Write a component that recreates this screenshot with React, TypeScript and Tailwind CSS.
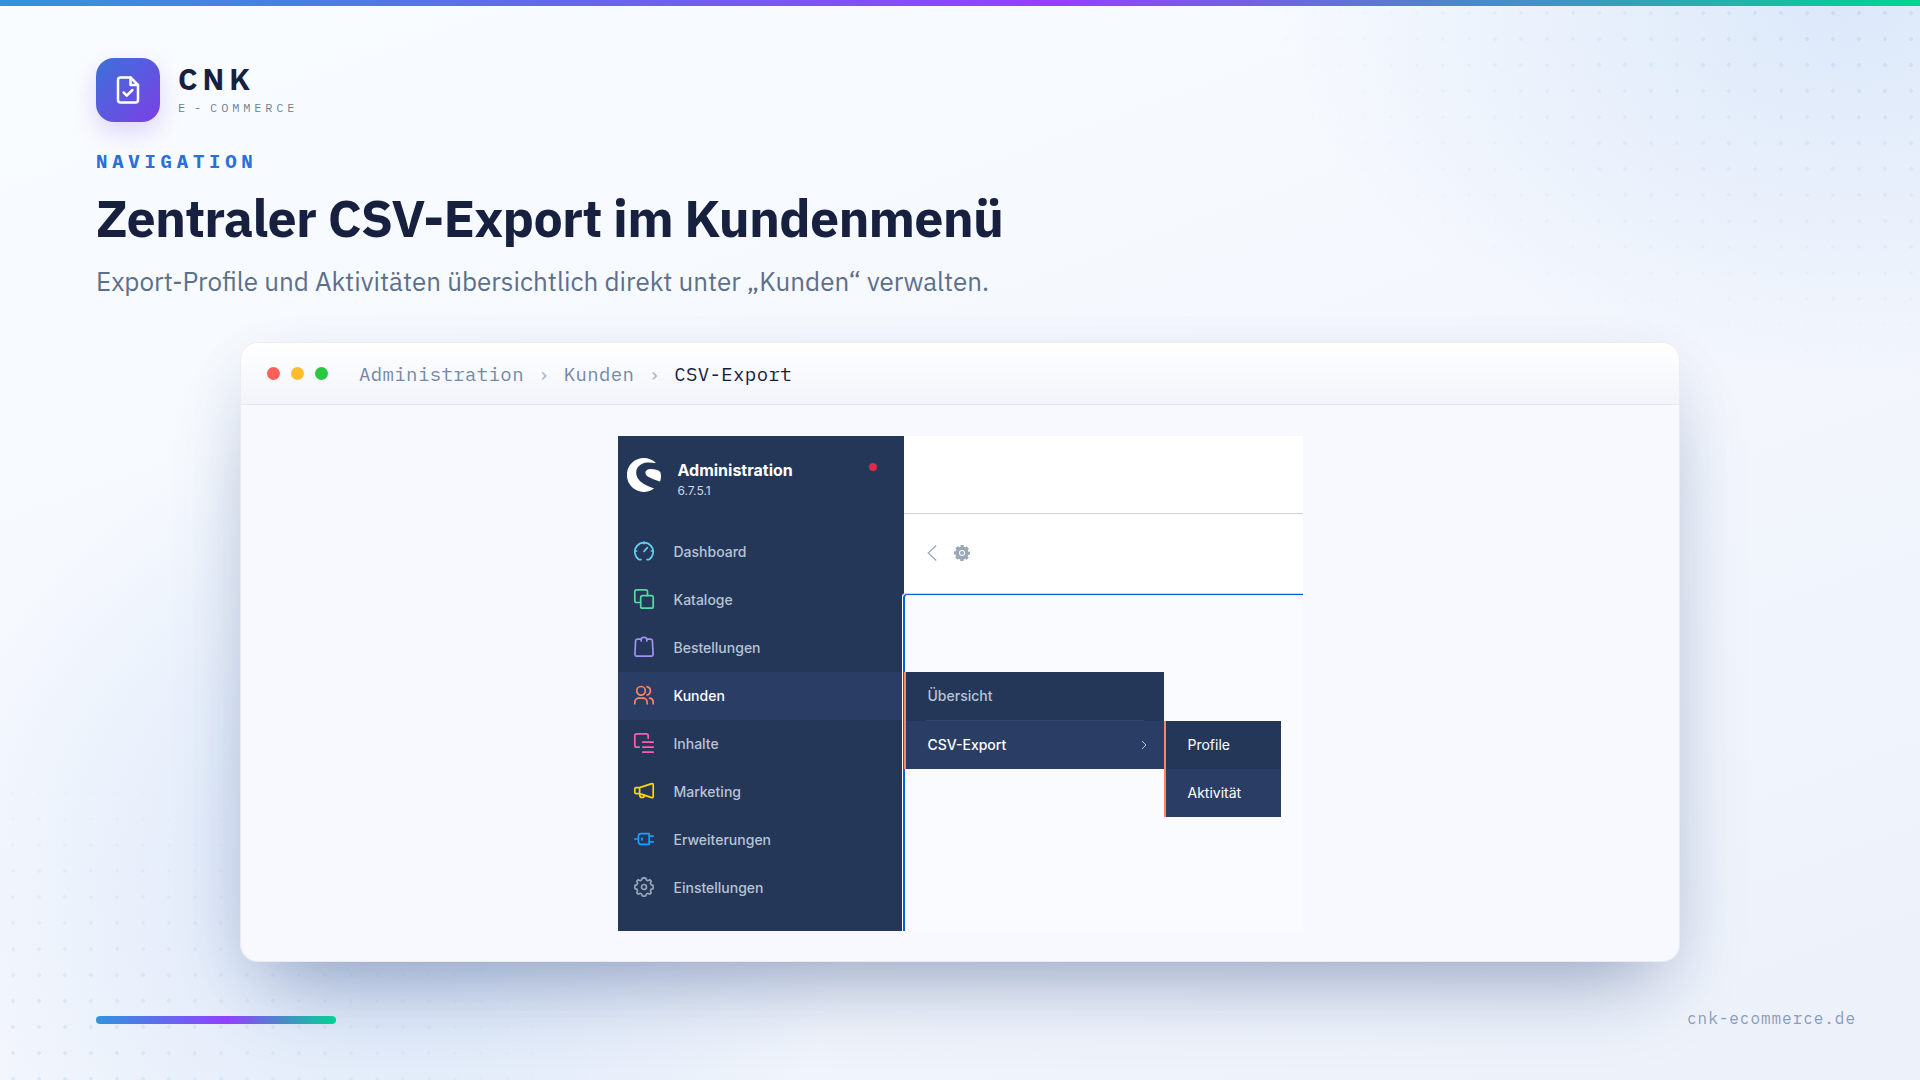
import type { ReactNode } from 'react'

type NavItem = {
  label: string
  color: string
  icon: ReactNode
  active?: boolean
}

const navItems: NavItem[] = [
  {
    label: 'Dashboard',
    color: 'text-[#66cbea]',
    icon: (
      <>
        <path d="M7 18.6H5A9.2 9.2 0 1 1 15 18.6h-2" />
        <path d="M10 1v1.6M1 10h1.6M17.4 10H19M10 10.4l3.4-3.8" />
      </>
    ),
  },
  {
    label: 'Kataloge',
    color: 'text-[#57d9a3]',
    icon: (
      <>
        <path d="M6.5 13.5H2.5a1.7 1.7 0 0 1-1.7-1.7V2.5A1.7 1.7 0 0 1 2.5.8h9.3a1.7 1.7 0 0 1 1.7 1.7v4" />
        <rect x="6.7" y="6.7" width="12.5" height="12.5" rx="1.8" />
      </>
    ),
  },
  {
    label: 'Bestellungen',
    color: 'text-[#a092f0]',
    icon: (
      <>
        <path d="M7.2 2.2H3.4a1.8 1.8 0 0 0-1.8 1.7L.9 17.3a1.8 1.8 0 0 0 1.8 1.9h14.6a1.8 1.8 0 0 0 1.8-1.9L18.4 3.9a1.8 1.8 0 0 0-1.8-1.7h-3.8" />
        <path d="M7.2 4V2.6a2.8 2.2 0 0 1 5.6 0V4" />
      </>
    ),
  },
  {
    label: 'Kunden',
    color: 'text-[#ff8562]',
    active: true,
    icon: (
      <>
        <circle cx="7" cy="5.8" r="4.3" />
        <path d="M.8 18.8v-1.4a4.2 4.2 0 0 1 4.2-4.2h4a4.2 4.2 0 0 1 4.2 4.2v1.4" />
        <path d="M13 1.6a4.3 4.3 0 0 1 0 8.4M15.6 13.2a4.2 4.2 0 0 1 3.6 4.2v1.4" />
      </>
    ),
  },
  {
    label: 'Inhalte',
    color: 'text-[#ff5cad]',
    icon: (
      <>
        <path d="M5.2 14.2H2.8a2 2 0 0 1-2-2V2.8a2 2 0 0 1 2-2h9.4a2 2 0 0 1 2 2v2.4" />
        <path d="M8.8 9.2h10.4M8.8 14.2h10.4M8.8 19.2h10.4" />
      </>
    ),
  },
  {
    label: 'Marketing',
    color: 'text-[#ffd500]',
    icon: (
      <>
        <path d="M5.6 6.6H2A1.2 1.2 0 0 0 .8 7.8v3.6A1.2 1.2 0 0 0 2 12.6h3.6zM5.6 6.6 17.8 2.6a1 1 0 0 1 1.4 1v12a1 1 0 0 1-1.4 1L5.6 12.6z" />
        <path d="M5.8 12.8v1.4a2.3 2.3 0 0 0 4.6 0" />
      </>
    ),
  },
  {
    label: 'Erweiterungen',
    color: 'text-[#189eff]',
    icon: (
      <>
        <path d="M.8 10h3.4" />
        <path d="M15.2 4.6H7a2.6 2.6 0 0 0-2.6 2.6v5.6A2.6 2.6 0 0 0 7 15.4h8.2z" />
        <path d="M15.2 7.2h4M15.2 12.8h4M8 9v2" />
      </>
    ),
  },
  {
    label: 'Einstellungen',
    color: 'text-[#95a5b8]',
    icon: (
      <>
        <path d="m10 .8 1.7.3.8 2 1.3.6 2.1-.8 1.3 1.3-.8 2.1.6 1.3 2 .8.2 1.6-.2 1.6-2 .8-.6 1.3.8 2.1-1.3 1.3-2.1-.8-1.3.6-.8 2-1.7.3-1.7-.3-.8-2-1.3-.6-2.1.8-1.3-1.3.8-2.1-.6-1.3-2-.8L.8 10l.2-1.6 2-.8.6-1.3-.8-2.1 1.3-1.3 2.1.8 1.3-.6.8-2z" />
        <circle cx="10" cy="10" r="2.5" />
      </>
    ),
  },
]

function Backdrop() {
  return (
    <>
      <div className="absolute inset-0 bg-[radial-gradient(ellipse_560px_380px_at_96%_0%,rgba(49,125,225,0.13),transparent),radial-gradient(ellipse_460px_440px_at_21%_79%,rgba(49,125,225,0.14),transparent)]" />
      <div className="absolute inset-0 bg-[radial-gradient(circle,rgba(43,108,176,0.11)_2px,transparent_2px)] bg-size-[26px_26px] mask-[radial-gradient(ellipse_680px_380px_at_100%_0%,black,transparent),radial-gradient(ellipse_600px_330px_at_0%_100%,black,transparent)]" />
    </>
  )
}

function Brand() {
  return (
    <div className="flex items-center gap-[18px]">
      <div className="flex size-16 items-center justify-center rounded-[18px] bg-linear-135/srgb from-[#3b72d8] to-[#7c3fe6] shadow-[0_10px_24px_rgba(124,58,237,0.20)]">
        <svg viewBox="0 0 24 24" className="size-[30px]" fill="none" stroke="white" strokeWidth="2" strokeLinecap="round" strokeLinejoin="round">
          <path d="M14 2H6a2 2 0 0 0-2 2v16a2 2 0 0 0 2 2h12a2 2 0 0 0 2-2V8z" />
          <path d="M14 2v6h6" />
          <path d="m8.5 14 2.5 2.5 4.5-4.5" />
        </svg>
      </div>
      <div className="flex flex-col">
        <span className="text-[30px] leading-[34px] font-bold tracking-[5px]">CNK</span>
        <span className="mt-1 mb-0.5 font-['IBM_Plex_Mono','Liberation_Mono',monospace] text-xs leading-4 tracking-[0.32em] text-[#718096]">
          E<span className="mx-[5px]">-</span>COMMERCE
        </span>
      </div>
    </div>
  )
}

function Crumb({ children }: { children: ReactNode }) {
  return <a href="#" className="text-[#7488a8]">{children}</a>
}

function WindowBar() {
  return (
    <div className="flex h-[62px] items-center border-b border-[#e2e8f0] bg-linear-to-b/srgb from-white to-[#f1f4fa] px-[26px]">
      <div className="flex gap-[11px]">
        <span className="size-[13px] rounded-full bg-[#ff5f57]" />
        <span className="size-[13px] rounded-full bg-[#febc2e]" />
        <span className="size-[13px] rounded-full bg-[#28c840]" />
      </div>
      <nav className="ml-[31px] flex gap-3.5 font-['IBM_Plex_Mono','Liberation_Mono',monospace] text-[19px] leading-6 tracking-[0.02em]">
        <Crumb>Administration</Crumb>
        <span className="text-[#a9b7cc]">›</span>
        <Crumb>Kunden</Crumb>
        <span className="text-[#a9b7cc]">›</span>
        <span className="text-[#17213f]">CSV-Export</span>
      </nav>
    </div>
  )
}

function Sidebar() {
  return (
    <aside className="w-[286px] bg-[#243758]">
      <div className="flex h-[92px] items-start pt-[22px] pr-[27px] pl-[9px]">
        <svg viewBox="0 0 34 34" className="size-[34px]" fill="white">
          <path d="M28.5 4.6A17 17 0 1 0 26.8 30.8c.3-.2.2-.5-.1-.6-2.6-1.1-6.7-2.3-9.9-4.3C12.4 23 9.2 19.5 9.2 14.7c0-5.7 4.7-9.7 11-10.2 2.6-.2 5.4.1 8 .5.4.1.6-.2.3-.4z" />
          <path d="M34 17.2c-.1-1.6-.5-2.8-1-3.5-1.6-1.7-5.6-2.7-8.6-2.7-3.6 0-6 1.4-6 3.7 0 2.6 2.4 4.2 6.3 5.7 3.1 1.2 6.3 2.3 8.4 3.2.6-1.8 1-4.2.9-6.4z" />
        </svg>
        <div className="ml-[17px] flex flex-1 flex-col pt-0.5">
          <span className="text-base leading-5 font-bold text-white">Administration</span>
          <span className="mt-px text-xs leading-5 text-[#cdd8e6]">6.7.5.1</span>
        </div>
        <span className="mt-[5px] size-2 rounded-full bg-[#de294c]" />
      </div>
      <nav>
        {navItems.map(({ label, color, icon, active }) => (
          <a
            key={label}
            href="#"
            className={`flex h-12 items-center gap-5 px-4 text-sm font-medium ${
              active ? 'bg-[#2a3e65] text-white' : 'text-[#b7c3d6]'
            }`}
          >
            <svg
              viewBox="0 0 20 20"
              className={`-mt-0.5 size-5 overflow-visible ${color}`}
              fill="none"
              stroke="currentColor"
              strokeWidth="1.7"
              strokeLinecap="round"
              strokeLinejoin="round"
            >
              {icon}
            </svg>
            {label}
          </a>
        ))}
      </nav>
    </aside>
  )
}

// Flyout next to the active sidebar entry, with its own nested level
function Flyout() {
  return (
    <div className="absolute top-[236px] left-[286px] flex items-end text-sm text-white">
      <div className="w-[260px] border-l-2 border-[#ff8562] bg-[#243758] font-medium">
        <a href="#" className="flex h-12 items-center px-[22px] text-[#b7c3d6]">Übersicht</a>
        <div className="mx-5 h-px bg-[#33466a]" />
        <a href="#" className="flex h-12 items-center justify-between bg-[#2a3e65] pr-[17px] pl-[22px]">
          CSV-Export
          <svg viewBox="0 0 6 10" className="h-2.5 w-1.5" fill="none" stroke="#b7c3d6" strokeWidth="1">
            <path d="m1 1 4 4-4 4" />
          </svg>
        </a>
      </div>
      <div className="-mb-12 w-[117px] border-l-2 border-[#ff8562] bg-[#243758]">
        <a href="#" className="flex h-12 items-center px-[22px]">Profile</a>
        <a href="#" className="flex h-12 items-center bg-[#2a3e65] px-[22px]">Aktivität</a>
      </div>
    </div>
  )
}

function AdminPreview() {
  return (
    <div className="relative flex h-[495px] w-[685px] font-['Inter',sans-serif]">
      <Sidebar />
      <main className="flex flex-1 flex-col bg-white">
        <div className="h-[78px] border-b border-[#cccfd3]" />
        <div className="flex h-[79px] items-center gap-[17px] px-[23px] pb-0.5 text-[#9aa8b5]">
          <button type="button" aria-label="Zurück">
            <svg viewBox="0 0 10 16" className="h-4 w-2.5" fill="none" stroke="currentColor" strokeWidth="1.2">
              <path d="M9.2.5 1.2 8l8 7.5" />
            </svg>
          </button>
          <button type="button" aria-label="Einstellungen">
            <svg viewBox="0 0 16 16" className="size-4" fill="currentColor">
              <circle cx="8" cy="8" r="4.8" fill="none" stroke="currentColor" strokeWidth="3.6" />
              <circle cx="8" cy="8" r="6.6" fill="none" stroke="currentColor" strokeWidth="2.8" strokeDasharray="3.2 1.984" strokeDashoffset="1.6" />
              <circle cx="8" cy="8" r="2" />
            </svg>
          </button>
        </div>
        <div className="-ml-0.5 flex flex-1 rounded-tl border-t border-l border-t-[#d1d9e0] border-l-white bg-white">
          <div className="flex-1 rounded-tl-sm border-t border-l-2 border-[#0060d6] bg-[#fafbff]" />
        </div>
      </main>
      <Flyout />
    </div>
  )
}

export default function App() {
  return (
    <div className="relative flex min-h-screen flex-col overflow-hidden bg-linear-160/srgb from-[#f9fcff] via-[#f4f7fd] to-[#ecf1fa] font-['IBM_Plex_Sans','Roboto',sans-serif] text-[#17213f]">
      <Backdrop />
      <div className="relative h-1.5 bg-linear-to-r/srgb from-[#3194dc] via-[#9340ff] via-55% to-[#00d492]" />

      <header className="relative px-24 pt-[52px]">
        <Brand />
        <p className="mt-[27px] font-['IBM_Plex_Mono','Liberation_Mono',monospace] text-[19px] leading-6 font-bold tracking-[0.25em] text-[#2b6fd8]">
          NAVIGATION
        </p>
        <h1 className="mt-3 text-[52px] leading-[66px] font-bold tracking-[-0.015em]">
          Zentraler CSV-Export im Kundenmenü
        </h1>
        <p className="mt-3 text-[26px] leading-9 text-[#5d6f89]">
          Export-Profile und Aktivitäten übersichtlich direkt unter „Kunden“ verwalten.
        </p>
      </header>

      <section className="relative mx-auto mt-[43px] w-3/4 rounded-[18px] shadow-[0_40px_80px_-30px_rgba(30,58,115,0.42),0_20px_60px_rgba(40,70,130,0.07)]">
        <div className="overflow-hidden rounded-[18px] border border-[#e9ecf2] bg-[#f8f9fe]">
          <WindowBar />
          <div className="flex justify-center pt-[31px] pb-[30px]">
            <AdminPreview />
          </div>
        </div>
      </section>

      <footer className="relative mt-auto flex items-center justify-between pt-11 pr-16 pb-[51px] pl-24">
        <div className="mt-1 h-2 w-60 rounded bg-linear-to-r/srgb from-[#3194dc] via-[#9340ff] via-55% to-[#00d492]" />
        <a href="#" className="font-['IBM_Plex_Mono','Liberation_Mono',monospace] text-base leading-6 tracking-[0.06em] text-[#8a9bbb]">
          cnk-ecommerce.de
        </a>
      </footer>
    </div>
  )
}
